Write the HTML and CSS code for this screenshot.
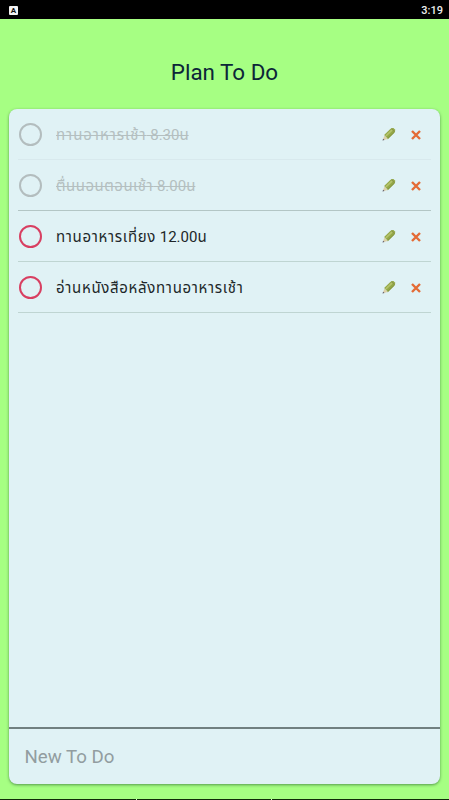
FILE: index.html
```html
<!DOCTYPE html>
<html lang="th">
<head>
<meta charset="utf-8">
<title>Plan To Do</title>
<link rel="stylesheet" href="styles.css">
</head>
<body>
<svg width="0" height="0" class="defs">
  <symbol id="pencil" viewBox="0 0 14 14">
    <path d="M.8 13.3 2.3 8.8 5.7 12Z" fill="#ddcfa8"/>
    <path d="M.5 13.5 1.1 11.7 2.5 12.9Z" fill="#565366"/>
    <path d="M2.1 8 8.3 1.9Q9.8 .6 11.4 1L13 2.5Q13.6 4.1 12.5 5.6L6 12Z" fill="#94a847"/>
    <path d="M3.8 9 10.2 2.9" stroke="#b5c46c" stroke-width="1.7"/>
    <path d="M5.7 11.6 12.4 5.2" stroke="#7b8b38" stroke-width=".8"/>
    <path d="M9.2 1.6 12.7 4.7" stroke="#838b49" stroke-width=".8"/>
  </symbol>
  <symbol id="cross" viewBox="0 0 10 10">
    <path d="M1 1 9 9M9 1 1 9" stroke="#e46b35" stroke-width="2.4"/>
  </symbol>
</svg>
<header class="status">
  <span class="keyboard">A</span>
  <time>3:19</time>
</header>
<main class="app">
  <h1>Plan To Do</h1>
  <section class="card">
    <ul class="list">
      <li class="item done faint"><span class="check"></span><span class="label"><span class="widest">ทานอาหารเช้า</span> 8.30น</span><svg class="edit"><use href="#pencil"/></svg><svg class="remove"><use href="#cross"/></svg></li>
      <li class="item done"><span class="check"></span><span class="label"><span class="wide">ตื่นนอนตอนเช้า</span> 8.00น</span><svg class="edit"><use href="#pencil"/></svg><svg class="remove"><use href="#cross"/></svg></li>
      <li class="item"><span class="check"></span><span class="label"><span class="wider">ทานอาหารเที่ยง</span> 12.00น</span><svg class="edit"><use href="#pencil"/></svg><svg class="remove"><use href="#cross"/></svg></li>
      <li class="item"><span class="check"></span><span class="label"><span class="wider">อ่านหนังสือหลังทานอาหารเช้า</span></span><svg class="edit"><use href="#pencil"/></svg><svg class="remove"><use href="#cross"/></svg></li>
    </ul>
    <div class="entry">New To Do</div>
  </section>
</main>
<footer class="nav"><i></i><i></i><i></i></footer>
</body>
</html>
```

FILE: styles.css
```css
* { box-sizing: border-box; }
body {
  margin: 0;
  height: 800px;
  display: flex;
  flex-direction: column;
  overflow: hidden;
  background: #a6ff83;
  font-family: Roboto, "Noto Sans Thai", "Noto Sans", sans-serif;
}
.defs { position: absolute; }
.status {
  height: 19px;
  flex: none;
  display: flex;
  justify-content: space-between;
  align-items: center;
  padding: 1px 6px 0 9px;
  background: #000;
  color: #eee;
  font-size: 11px;
  font-weight: 500;
}
.keyboard {
  width: 9px;
  height: 9px;
  border-radius: 1px;
  background: #f2f2f2;
  color: #111;
  font-size: 8px;
  font-weight: 700;
  line-height: 9px;
  text-align: center;
}
.app {
  flex: 1;
  display: flex;
  flex-direction: column;
  padding: 0 9px 15px;
}
h1 {
  height: 90px;
  margin: 0;
  padding-top: 16px;
  color: #0c2638;
  font-size: 22.4px;
  font-weight: 400;
  line-height: 74px;
  text-align: center;
}
.card {
  flex: 1;
  display: flex;
  flex-direction: column;
  border-radius: 8px;
  background: #e0f2f5;
  box-shadow: 0 1px 3px rgba(0, 50, 20, .5);
}
.list {
  flex: 1;
  margin: 0;
  padding: 0 9px;
  list-style: none;
}
.item {
  height: 51px;
  display: flex;
  align-items: center;
  padding-left: 1px;
  color: #202729;
  border-bottom: 1px solid #bfd5d2;
}
.item:nth-child(2) { border-color: #b3c6c5; }
.faint { border-color: #d8e9ed; }
.check {
  width: 23px;
  height: 23px;
  flex: none;
  border: 2px solid #d83f61;
  border-radius: 50%;
}
.label {
  flex: 1;
  margin-left: 14px;
  padding-top: 2px;
  font-size: 15px;
  line-height: 24px;
  white-space: nowrap;
}
.wide { letter-spacing: .5px; }
.wider { letter-spacing: .68px; }
.widest { letter-spacing: .96px; }
.done { color: #b4bfc0; }
.done .check { border-color: #b3bdbe; }
.done .label { text-decoration: line-through 1px; }
.edit { width: 14px; height: 14px; margin: 0 15px 0 0; flex: none; }
.remove { width: 10px; height: 10px; margin: 1px 10px 0 0; flex: none; }
.entry {
  height: 57px;
  padding: 1px 16px 0 15.5px;
  border-top: 2px solid #718080;
  color: #929da0;
  font-size: 18.7px;
  line-height: 54px;
}
.nav {
  height: 1px;
  flex: none;
  display: grid;
  grid-template-columns: 136px 134px 1fr;
  gap: 1px;
  background: #d8ffc8;
}
.nav i { background: #102b08; }
```
